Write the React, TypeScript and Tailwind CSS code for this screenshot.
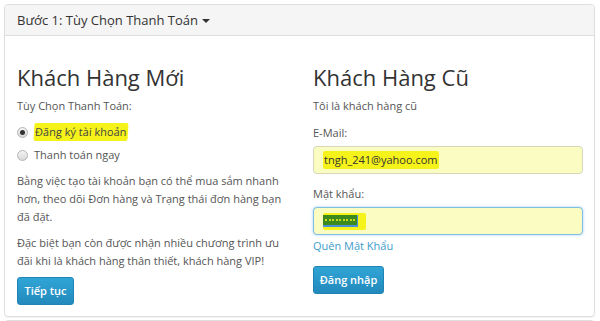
import React from 'react';

const font = { fontFamily: '"Open Sans", "Noto Sans", sans-serif' };

function Radio({ checked }: { checked?: boolean }) {
  return (
    <span className="relative inline-flex h-[11px] w-[11px] shrink-0 items-center justify-center rounded-full border border-[#b5b5b5] bg-gradient-to-b from-[#f4f4f4] to-[#d8d8d8]">
      {checked && <span className="h-[5px] w-[5px] rounded-full bg-[#333]" />}
    </span>
  );
}

export default function App() {
  return (
    <div className="h-[321px] w-[600px] overflow-hidden bg-white pt-[4px] pl-[4px] pr-[5px] text-[11px] leading-[18px] text-[#555]" style={font}>
      <div className="rounded-[4px] border border-[#dedede] shadow-[0_1px_1px_rgba(0,0,0,0.05)]">
        <div className="flex h-[31px] items-center rounded-t-[4px] border-b border-[#dedede] bg-[#f5f5f5] pl-[12px] text-[13px] text-[#333]">
          Bước 1: Tùy Chọn Thanh Toán
          <span className="ml-[4px] mt-[2px] h-0 w-0 border-x-[4px] border-t-[4px] border-x-transparent border-t-[#333]" />
        </div>
        <div className="grid h-[280px] grid-cols-[270px_270px] gap-x-[26px] pl-[12px] pt-[27px]">
          <div>
            <h2 className="text-[22px] leading-[28px] text-[#333]">Khách Hàng Mới</h2>
            <p className="mt-[6px]">Tùy Chọn Thanh Toán:</p>
            <div className="mt-[8px] flex items-center gap-[6px]">
              <Radio checked />
              <span className="-skew-x-3 rounded-[2px] bg-[#f6f31a] px-[1px] text-[#444]">Đăng ký tài khoản</span>
            </div>
            <div className="mt-[5px] flex items-center gap-[6px]">
              <Radio />
              <span>Thanh toán ngay</span>
            </div>
            <p className="mt-[8px]">
              Bằng việc tạo tài khoản bạn có thể mua sắm nhanh hơn, theo dõi Đơn hàng và Trạng thái đơn hàng bạn đã đặt.
            </p>
            <p className="mt-[8px]">
              Đặc biệt bạn còn được nhận nhiều chương trình ưu đãi khi là khách hàng thân thiết, khách hàng VIP!
            </p>
            <button className="mt-[7px] h-[28px] w-[57px] rounded-[3px] border border-[#1f84b3] bg-gradient-to-b from-[#30a5d6] to-[#2389bc] text-[11px] font-semibold text-white">
              Tiếp tục
            </button>
          </div>
          <div>
            <h2 className="text-[22px] leading-[28px] text-[#333]">Khách Hàng Cũ</h2>
            <p className="mt-[6px]">Tôi là khách hàng cũ</p>
            <p className="mt-[9px]">E-Mail:</p>
            <div className="mt-[4px] flex h-[28px] items-center rounded-[4px] border border-[#d6d6b8] bg-[#fafcc2] pl-[9px] text-[#333]">
              <span className="rounded-[2px] bg-[#f6f31a] px-[1px]">tngh_241@yahoo.com</span>
            </div>
            <p className="mt-[11px]">Mật khẩu:</p>
            <div className="mt-[4px] flex h-[28px] items-center rounded-[4px] border border-[#7fbde6] bg-[#fafcc2] pl-[9px] shadow-[0_0_3px_rgba(102,175,233,0.6)]">
              <span className="flex h-[17px] items-center rounded-[2px] bg-[#f6f31a] pr-[8px]">
                <span className="flex h-[12px] items-center gap-[1.5px] border-b-2 border-r border-[#4a8fd8] bg-[#3c8a1c] px-[2px]">
                  {Array.from({ length: 9 }).map((_, i) => (
                    <span key={i} className="h-[2px] w-[2px] rounded-full bg-[#f6f31a]" />
                  ))}
                </span>
              </span>
            </div>
            <a className="mt-[2px] block text-[#3d9cca]">Quên Mật Khẩu</a>
            <button className="mt-[11px] h-[28px] w-[71px] rounded-[3px] border border-[#1f84b3] bg-gradient-to-b from-[#30a5d6] to-[#2389bc] text-[11px] font-semibold text-white">
              Đăng nhập
            </button>
          </div>
        </div>
      </div>
      <div className="mt-[3px] h-[10px] rounded-t-[4px] border border-[#dedede]" />
    </div>
  );
}
